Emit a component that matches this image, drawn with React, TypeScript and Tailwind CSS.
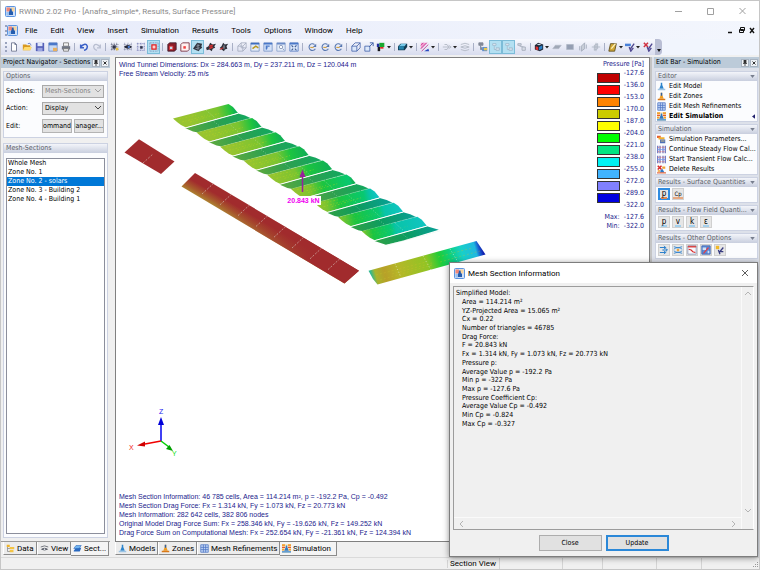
import type { ReactNode } from "react";
import clsx from "clsx";

const MENU = ["File", "Edit", "View", "Insert", "Simulation", "Results", "Tools", "Options", "Window", "Help"];

const LEGEND = [
  { color: "#c00000", value: "-127.6" },
  { color: "#ff0000", value: "-136.0" },
  { color: "#ff8400", value: "-153.0" },
  { color: "#cccc00", value: "-170.0" },
  { color: "#ffff00", value: "-187.0" },
  { color: "#00ff00", value: "-204.0" },
  { color: "#00e682", value: "-221.0" },
  { color: "#00f2f2", value: "-238.0" },
  { color: "#40b4ff", value: "-255.0" },
  { color: "#8080ff", value: "-272.0" },
  { color: "#0000e0", value: "-289.0" },
];

const SECTIONS = ["Whole Mesh", "Zone No. 1", "Zone No. 2 - solars", "Zone No. 3 - Building 2", "Zone No. 4 - Building 1"];

const INFO = [
  "Area = 114.214 m²",
  "YZ-Projected Area = 15.065 m²",
  "Cx = 0.22",
  "Number of triangles = 46785",
  "Drag Force:",
  "F = 20.843 kN",
  "Fx = 1.314 kN, Fy = 1.073 kN, Fz = 20.773 kN",
  "Pressure p:",
  "Average Value p = -192.2 Pa",
  "Min p = -322 Pa",
  "Max p = -127.6 Pa",
  "Pressure Coefficient Cp:",
  "Average Value Cp = -0.492",
  "Min Cp = -0.824",
  "Max Cp = -0.327",
];

const ICONS: Record<string, ReactNode> = {
  new: <path d="M3 1h4l2 2v8H3z M7 1v2h2" fill="#fff" stroke="#66708c" />,
  open: (
    <>
      <path d="M1 3h4l1 1h4v6H1z" fill="#d99a20" />
      <path d="M3 6h9l-2 4H1z" fill="#ffdc70" />
      <path d="M7 2q3-2 4 2" fill="none" stroke="#5a78c8" />
    </>
  ),
  save: (
    <>
      <path d="M1 1h10v10H1z" fill="#5560b8" />
      <path d="M3 1h6v4H3z" fill="#dfe6fa" />
      <path d="M3 7h6v4H3z" fill="#9aa4e0" />
    </>
  ),
  table: (
    <>
      <path d="M1 1h10v10H1z" fill="#c8daf4" stroke="#6d8cc4" />
      <path d="M1 1h10v3H1z" fill="#4a78c8" />
      <path d="M6 7h5v4H6z" fill="#e8b060" />
    </>
  ),
  print: (
    <>
      <path d="M3 1h6v4H3z" fill="#f4f4f4" stroke="#777" />
      <path d="M1 5h10v4H1z" fill="#707684" />
      <path d="M3 8h6v3H3z" fill="#eee" stroke="#777" />
    </>
  ),
  undo: <path d="M2 3v4h4M2 6q6-6 8-1q0 4-4 5" fill="none" stroke="#3c62c8" strokeWidth="1.8" />,
  redo: <path d="M10 3v4H6M10 6q-6-6-8-1q0 4 4 5" fill="none" stroke="#b8bed0" strokeWidth="1.5" />,
  mesh: (
    <>
      <path d="M2 1v10M5 1v10M8 1v10M1 3h10M1 6h10M1 9h10" stroke="#5a5f78" strokeDasharray="1 1" />
      <path d="M3 4h4v4H3z" fill="#303448" />
      <path d="M7 7h3v3H7z" fill="#e8c040" />
    </>
  ),
  meshEye: (
    <>
      <path d="M2 1v10M6 1v10M10 1v10M1 3h10M1 9h10" stroke="#7a80a0" strokeDasharray="1 1" />
      <path d="M1 6q5-5 10 0q-5 4-10 0z" fill="#252838" />
      <circle cx="7" cy="6" r="1.4" fill="#5080d8" />
    </>
  ),
  meshDots: (
    <>
      <path d="M2 1v10M6 1v10M10 1v10M1 2h10M1 6h10M1 10h10" stroke="#6a70b0" strokeDasharray="1 1" />
      <path d="M5 5h3v3H5z" fill="#30344c" />
    </>
  ),
  meshRed: (
    <>
      <path d="M1 1v10M11 1v10M1 1h10M1 11h10" stroke="#6a80b0" strokeDasharray="1 1" />
      <path d="M3.500 3.500h5v5h-5z" fill="#ffd0d0" stroke="#e02020" strokeWidth="1.500" />
    </>
  ),
  boxDark: (
    <>
      <path d="M1 3l2-2h8v8l-2 2H1z" fill="#8c1c28" stroke="#402030" />
      <path d="M3 5h4v4H3z" fill="#c8dcf0" stroke="#e03030" />
    </>
  ),
  boxLight: (
    <>
      <path d="M1 3l2-2h8v8l-2 2H1z" fill="#fff0f0" stroke="#702838" />
      <path d="M4 5h3v3H4z" fill="#f04040" />
    </>
  ),
  wheel: (
    <>
      <path d="M0 8l2-3 3-4 6 1-1 3 1 2-3 2-1 2-3-1-2-1z" fill="#303440" />
      <path d="M4 5l4-1M3 8l5-1M6 2v8" stroke="#a8b4c0" strokeWidth=".8" />
    </>
  ),
  wheelRed: (
    <>
      <path d="M0 7l3-2 2-4 3 2 4-1-2 3 1 2-3 1-1 3-3-2-3 1z" fill="#30323c" />
      <path d="M4 5l4-1M4 8l4-2" stroke="#d83030" strokeWidth="1.800" />
    </>
  ),
  wheelAxis: (
    <>
      <path d="M1 7l2-2 2-4 2 2 4-1-2 3 1 3-3 1-1 2-3-2z" fill="#30323c" />
      <path d="M1 9l4-2" stroke="#c83030" strokeWidth="1.300" />
      <path d="M6 4v4" stroke="#bcc4d0" />
    </>
  ),
  boxGrey: <path d="M1 5h6v6H1zM1 5l4-4h6v6l-4 4M7 5l4-4M5 1v6M5 7h6" fill="none" stroke="#a0a8ba" strokeWidth=".9" />,
  winPen: (
    <>
      <path d="M1 1h10v10H1z" fill="#e4ecf8" stroke="#8098c0" />
      <path d="M1 1h10v2H1z" fill="#3c6cc0" />
      <path d="M3 8l4-3 3 2" stroke="#b89820" strokeWidth="1.800" fill="none" />
    </>
  ),
  winBlue: (
    <>
      <path d="M1 1h10v10H1z" fill="#d4e2f8" stroke="#7c98c8" />
      <path d="M1 1h10v2H1z" fill="#4a78c8" />
      <path d="M8 5H4v4M4 9l1-3" stroke="#4a78c8" strokeWidth="1.500" fill="none" />
    </>
  ),
  winZoom: (
    <>
      <path d="M1 1h10v10H1z" fill="#e4ecf8" stroke="#8ca4cc" />
      <path d="M1 1h10v2H1z" fill="#6c8cc8" />
      <circle cx="6" cy="6" r="2" fill="#fff" stroke="#8494b4" />
      <path d="M8 8l2 2" stroke="#8494b4" />
    </>
  ),
  winFit: (
    <>
      <path d="M1 1h10v10H1z" fill="#dce8fa" stroke="#5a80c4" />
      <path d="M3 4l2 2M9 4L7 6M3 10l2-2M9 10L7 8" stroke="#405c94" strokeWidth="1.300" />
      <path d="M1 1h10v2H1z" fill="#4a78c8" />
    </>
  ),
  rotate: (
    <>
      <path d="M9 3a4 4 0 1 0 1 5" fill="none" stroke="#5878b0" strokeWidth="1.300" />
      <path d="M4 6.500h4" stroke="#d0a040" strokeWidth="1.300" />
      <path d="M11 2v4H7z" fill="#5878b0" />
    </>
  ),
  cube: (
    <>
      <path d="M1 5h6v6H1z" fill="#dce8fa" stroke="#4868ac" />
      <path d="M1 5l4-4h6v6l-4 4M7 5l4-4" fill="none" stroke="#4868ac" />
    </>
  ),
  cubeArrow: (
    <>
      <path d="M1 5h6v6H1z" fill="#dce8fa" stroke="#4868ac" />
      <path d="M6 6l5-5M7 1h4v4" fill="none" stroke="#4868ac" strokeWidth="1.200" />
    </>
  ),
  rgb: (
    <>
      <path d="M2 6h3v5H2z" fill="#18181c" />
      <path d="M4 1h6v5H4z" fill="#18a830" />
      <path d="M5 6h4v2H5z" fill="#e02828" />
      <path d="M1 2h3v4H1z" fill="#2430a0" />
    </>
  ),
  solid: (
    <>
      <path d="M0 5l3-3h8v4l-3 4H0z" fill="#123c54" />
      <path d="M1 5l3-3h6L8 5z" fill="#76c8e8" />
      <path d="M1 5h6v4H1z" fill="#2484ac" />
    </>
  ),
  hatch: (
    <>
      <path d="M1 1h8L1 9z" fill="#f4a0d0" />
      <path d="M1 8l7-7M1 4l3-3M2 11l8-8" stroke="#c03090" />
      <path d="M5 11h6l-1-3z" fill="#2848c0" />
    </>
  ),
  lines: <path d="M3 3h3l2 3M1 6h8M3 9h3l2-3M8 4l3 2-3 2" fill="none" stroke="#b0b6c2" />,
  swirl: <path d="M1 3q5-3 10 0M1 6q5-3 10 0q-5 3-10 0M1 9q5 3 10 0" fill="none" stroke="#b0b6c2" />,
  tag: (
    <>
      <path d="M1 1h5v3H1zM3 4v5h3" fill="#808898" stroke="#808898" />
      <path d="M5 6h6v5H5z" fill="#5c8cd0" />
      <path d="M7 7h4v3H7z" fill="#e8c850" />
    </>
  ),
  tagPale: (
    <>
      <path d="M2 2h4v2H2zM4 5v4h3" fill="#eef4fa" stroke="#9cb8cc" />
      <path d="M6 7h4v3H6z" fill="#d8e4ee" stroke="#9cb8cc" />
    </>
  ),
  tagGrey: (
    <>
      <path d="M1 2h4v2H1zM3 5l5 1" fill="#d8dce6" stroke="#a4acba" />
      <path d="M6 6h4v4H6z" fill="#d8dce6" stroke="#a4acba" />
    </>
  ),
  rgbCube: (
    <>
      <path d="M1 4l4-3 6 2v6l-4 2-6-2z" fill="#222838" />
      <path d="M2 5l3 1v4l-3-1z" fill="#e03030" />
      <path d="M6 6l4-2v4l-4 2z" fill="#2880c8" />
      <path d="M3 3l3-1 3 1-3 1z" fill="#c8dce8" />
    </>
  ),
  plane: <path d="M1 8l3-4h7L8 8z" fill="#a0a8b6" stroke="#b4bac8" />,
  planeFront: <path d="M2 3h8v6H2z" fill="#949eb2" stroke="#b0b8c6" />,
  planeSide: <path d="M4 5l4-4v7l-4 3zM2 5v5M10 3v5" fill="#c8ced8" stroke="#a0a8b8" />,
  planeCut: <path d="M1 6h10M6 1v10M4 4l4-2v6L4 10z" fill="#d4d8e2" stroke="#acb4c2" />,
  section: (
    <>
      <path d="M1 11l2-9h7L8 11z" fill="#d0a838" stroke="#584818" />
      <path d="M4 8l5-6" stroke="#fff4c0" strokeWidth="1.500" />
    </>
  ),
  result: (
    <>
      <path d="M0 2h7v3H0z" fill="#4880d8" />
      <path d="M6 9l5-7M5 6l2 5 3-4" fill="none" stroke="#504890" strokeWidth="1.600" />
    </>
  ),
  resultDel: (
    <>
      <path d="M1 1l5 5M6 1L1 6" stroke="#d03040" strokeWidth="1.800" />
      <path d="M6 9l5-7M5 6l2 5 3-4" fill="none" stroke="#504890" strokeWidth="1.600" />
    </>
  ),
  cone: (
    <>
      <path d="M5 1h2v3l2 5H3l2-5z" fill="#2c84cc" />
      <path d="M1 9h10v2H1z" fill="#9cc4e4" />
    </>
  ),
  coneZone: (
    <>
      <path d="M5 1h2v3l2 5H3l2-5z" fill="#f09c20" />
      <path d="M5 1h2v4H5z" fill="#3060a0" />
      <path d="M1 9h10v2H1z" fill="#d87818" />
    </>
  ),
  grid: (
    <>
      <path d="M1 1h10v10H1z" fill="#c0d4f4" stroke="#4c74c4" />
      <path d="M4.500 1v10M7.500 1v10M1 4.500h10M1 7.500h10" stroke="#4c74c4" />
    </>
  ),
  sim: (
    <>
      <path d="M0 0h12v12H0z" fill="#fbe6c0" />
      <path d="M0 1.500h4M8 1.500h4M0 7.500h3M9 7.500h3" stroke="#f0a030" strokeWidth="2.400" />
      <path d="M0 4.500h4M8 4.500h4" stroke="#e85828" strokeWidth="1.800" />
      <path d="M5 2h2v2l2 5H3l2-5z" fill="#3078c4" />
      <path d="M0 10.500h12" stroke="#3c8cd8" strokeWidth="1.800" />
    </>
  ),
  params: (
    <>
      <path d="M0 1h5v3H0z" fill="#e86030" />
      <path d="M2 3h8v3H2z" fill="#f0b030" />
      <path d="M4 6h7v5H4z" fill="#4c70b8" />
      <path d="M5 8h5" stroke="#f8d070" />
    </>
  ),
  flow: (
    <>
      <path d="M1 1v10M11 1v10M4 1v10M8 1v10" stroke="#3850b8" strokeWidth="1.300" />
      <path d="M1 3h10M1 9h10" stroke="#e06868" strokeDasharray="2 1" />
      <path d="M1 6h10" stroke="#7c98e4" />
    </>
  ),
  remove: (
    <>
      <path d="M1 1l5 5M6 1L1 6" stroke="#d82828" strokeWidth="2" />
      <path d="M7 2h4v3H7zM1 7h3v2H1z" fill="#f0a030" />
      <path d="M5 7l2-2 3 5H4z" fill="#3078c4" />
      <path d="M0 10.500h12" stroke="#e86030" strokeWidth="1.500" />
    </>
  ),
  tree: (
    <>
      <path d="M1 1h4v3H1z" fill="#f0b428" />
      <path d="M2 4v6h4M2 6h4" fill="none" stroke="#888" />
      <path d="M5 4h6v3H5zM5 8h5v3H5z" fill="#f4c444" />
    </>
  ),
  eye: (
    <>
      <path d="M1 4q5-3 10 0" fill="none" stroke="#50545e" />
      <path d="M1 7q5-4 10 0q-5 3-10 0z" fill="#50545e" />
      <circle cx="6" cy="7" r="1.200" fill="#d8dce4" />
    </>
  ),
  layers: (
    <>
      <path d="M1 9l3-4h7L9 10H1z" fill="#2868c0" />
      <path d="M1 6l3-4h7L8 6H1z" fill="#70b4f0" stroke="#2060b8" strokeWidth=".7" />
    </>
  ),
  arrows: <path d="M1 3h7M4 6h6M1 9h7M6 1l2 2-2 2M8 4l2 2-2 2M6 7l2 2-2 2" fill="none" stroke="#2c80cc" strokeWidth="1.200" />,
  stream: (
    <>
      <path d="M1 2q5 3 10 0M1 10q5-3 10 0M1 5q5-4 10 0M1 7q5 4 10 0" fill="none" stroke="#2c80cc" />
      <circle cx="6" cy="6" r="1.600" fill="#f0a840" />
    </>
  ),
  chart: (
    <>
      <path d="M1 1h10v10H1z" fill="#f8f8fc" stroke="#8c98b8" />
      <path d="M1 1h10v2H1z" fill="#d84848" />
      <path d="M2 5l3 1 2 2 3 1" fill="none" stroke="#d82828" strokeWidth="1.300" />
    </>
  ),
  probe: (
    <>
      <path d="M1 1h10v10H1z" fill="#5c8cd8" stroke="#3c64b0" />
      <path d="M3 10l6-7" stroke="#e04048" strokeWidth="1.500" />
      <path d="M2 3h4v3H2zM8 7h2v3H8z" fill="#d0e0f8" />
    </>
  ),
  pen: (
    <>
      <path d="M1 1h4v4H1z" fill="#f0b828" />
      <path d="M5 9l5-6M4 6l2 5M6 8h4" fill="none" stroke="#383c80" strokeWidth="1.500" />
    </>
  ),
};

type Tool = { icon: string; active?: boolean; drop?: boolean };

const on = (icon: string): Tool => ({ icon, active: true });
const dd = (icon: string): Tool => ({ icon, drop: true });

const TOOLS: (string | Tool)[][] = [
  ["new", "open", "save", "table", "print"],
  ["undo", "redo"],
  ["mesh", "meshEye", "meshDots", on("meshRed")],
  ["boxDark", "boxLight", on("wheel"), "wheelRed", "wheelAxis"],
  ["boxGrey", "winPen", "winBlue", "winZoom", "winFit"],
  ["rotate", "rotate", "rotate"],
  ["cube", "cubeArrow", dd("rgb")],
  [dd("solid")],
  [dd("hatch")],
  [dd("lines"), "swirl"],
  ["tag", on("tagPale"), on("tagPale"), "tagGrey"],
  [dd("rgbCube"), "plane", "planeFront", "planeSide", "planeCut"],
  [dd("section"), dd("result"), "resultDel"],
];

function Icon({ name, className = "size-[10px]" }: { name: string; className?: string }) {
  return (
    <svg viewBox="0 0 12 12" className={clsx("shrink-0", className)} aria-hidden="true">
      {ICONS[name]}
    </svg>
  );
}

function AppIcon() {
  return (
    <svg viewBox="0 0 22 22" className="size-[11px] shrink-0" aria-hidden="true">
      <rect x="1" y="1" width="20" height="20" rx="2" fill="#cfe0f8" stroke="#5c94e0" strokeWidth="2" />
      <path d="M3 3h7v8H3z" fill="#f08878" />
      <path d="M12 3h7v8h-7z" fill="#f8d49c" />
      <path d="M3 12h5v7H3z" fill="#98c0f0" />
      <path d="M10 5h3l1 6h2v7H8v-7h1z" fill="#245cae" />
    </svg>
  );
}

function Toolbar() {
  return (
    <div className="flex h-4 bg-[#f1f5fd]">
      <div className="flex items-center rounded-r bg-linear-to-b from-[#f8f9fe] to-[#d8dcee] pl-1">
        <span className="h-[10px] border-l-2 border-dotted border-[#9aa3bd]" />
        {TOOLS.map((group, g) => (
          <div key={g} className="flex items-center">
            {g > 0 && <span className="mx-[2px] h-2 w-px bg-[#a9b0c6]" />}
            {group.map((entry, i) => {
              const tool: Tool = typeof entry === "string" ? { icon: entry } : entry;
              return (
                <button
                  key={i}
                  type="button"
                  aria-label={tool.icon}
                  className={clsx(
                    "flex h-[14px] items-center justify-center",
                    tool.drop ? "w-[17px] gap-px" : "w-[13px]",
                    tool.active && "border border-[#7cbcd8] bg-[#b4e0f2]",
                  )}
                >
                  <Icon name={tool.icon} />
                  {tool.drop && (
                    <svg viewBox="0 0 4 4" className="size-1 shrink-0">
                      <path d="M0 1h4L2 3.500z" fill="#222" />
                    </svg>
                  )}
                </button>
              );
            })}
          </div>
        ))}
        <button type="button" aria-label="More buttons" className="ml-px flex h-4 w-[7px] items-end justify-center rounded-r bg-[#b9bed4] pb-[3px]">
          <svg viewBox="0 0 4 3" className="h-[3px] w-1">
            <path d="M0 0h4L2 3z" fill="#111" />
          </svg>
        </button>
      </div>
    </div>
  );
}

function PaneTitle({ children }: { children: ReactNode }) {
  return (
    <div className="flex h-[11px] items-center bg-[#bccbd9] pr-px pl-[2px] text-black">
      <h2 className="flex-1 whitespace-nowrap">{children}</h2>
      <button type="button" aria-label="Pin" className="mr-px flex size-2 items-center justify-center border border-[#a8b3c0] bg-[#eef2f6]">
        <svg viewBox="0 0 6 6" className="size-[6px]">
          <path d="M2 0h2v3H2zM1 3.500h4M3 4v2" fill="#333" stroke="#333" strokeWidth=".8" />
        </svg>
      </button>
      <button type="button" aria-label="Close" className="flex size-2 items-center justify-center border border-[#a8b3c0] bg-[#eef2f6]">
        <svg viewBox="0 0 6 6" className="size-[6px]">
          <path d="M1.500 1.500l3 3M4.500 1.500l-3 3" stroke="#333" />
        </svg>
      </button>
    </div>
  );
}

function Group({ title, arrow, className, children }: { title: string; arrow?: boolean; className?: string; children: ReactNode }) {
  return (
    <section className={clsx("flex flex-col border border-[#ccd2e2] bg-[#fbfcfe]", className)}>
      <h3 className="flex h-[9px] items-center bg-linear-to-b from-[#f3f5fa] to-[#c8cede] pr-[2px] pl-[2px] whitespace-nowrap text-[#5c5f68]">
        <span className="flex-1">{title}</span>
        {arrow && (
          <svg viewBox="0 0 6 4" className="h-[3px] w-[5px]">
            <path d="M0 0h6L3 4z" fill="#777e8e" />
          </svg>
        )}
      </h3>
      {children}
    </section>
  );
}

function Navigator() {
  const field = "h-[13px] w-full appearance-none border border-[#a9a9a9] bg-[#e2e2e2] pl-[2px] leading-none";
  return (
    <aside className="flex w-[114px] shrink-0 flex-col pr-[5px]">
      <PaneTitle>Project Navigator - Sections</PaneTitle>
      <div className="flex flex-1 flex-col gap-[5px] border-b border-[#9a9a9a] bg-[#f0f0f0] px-[2px] pt-[3px] pb-[3px]">
        <Group title="Options">
          <div className="grid grid-cols-[36px_1fr] items-center gap-y-1 py-1 pr-[3px] pl-[2px]">
            <label htmlFor="sections">Sections:</label>
            <span className="relative">
              <select id="sections" disabled className={clsx(field, "bg-[#cccccc] text-[#838383]")}>
                <option>Mesh-Sections</option>
              </select>
              <Chevron className="absolute top-1 right-[3px] text-[#a0a0a0]" />
            </span>
            <label htmlFor="action">Action:</label>
            <span className="relative">
              <select id="action" className={field}>
                <option>Display</option>
              </select>
              <Chevron className="absolute top-1 right-[3px] text-[#444]" />
            </span>
            <span>Edit:</span>
            <span className="grid grid-cols-2 gap-[2px]">
              {["Command", "Manager..."].map((name) => (
                <button key={name} type="button" className="flex h-[14px] justify-end overflow-hidden border border-[#b4b4b4] bg-[#e2e2e2] leading-3">
                  {name}
                </button>
              ))}
            </span>
          </div>
        </Group>
        <Group title="Mesh-Sections" className="flex-1">
          <ul className="mx-[2px] mt-[5px] mb-[3px] flex-1 border border-[#8c8f9c] bg-white" role="listbox" aria-label="Mesh sections">
            {SECTIONS.map((name, i) => (
              <li
                key={name}
                role="option"
                aria-selected={i === 2}
                className={clsx("h-[9px] pl-px leading-[9px] whitespace-nowrap", i === 2 && "bg-[#0078d7] text-white")}
              >
                {name}
              </li>
            ))}
          </ul>
        </Group>
      </div>
      <div className="flex h-[15px] items-start pl-[2px] font-[Roboto,sans-serif] text-[8px]">
        <Tab icon="tree" className="w-[34px]">Data</Tab>
        <Tab icon="eye" className="w-[34px]">View</Tab>
        <Tab icon="layers" className="w-[38px]" active>Sect...</Tab>
      </div>
    </aside>
  );
}

function Chevron({ className }: { className?: string }) {
  return (
    <svg viewBox="0 0 6 4" className={clsx("pointer-events-none h-1 w-[6px]", className)}>
      <path d="M0 0l3 3 3-3" fill="none" stroke="currentColor" />
    </svg>
  );
}

function Tab({ icon, active, className, children }: { icon: string; active?: boolean; className?: string; children: ReactNode }) {
  return (
    <button
      type="button"
      className={clsx(
        "flex items-center gap-[2px] border-r border-b border-[#8b8b8b] px-[2px] whitespace-nowrap",
        active ? "h-[14px] bg-[#f4f4f4]" : "h-[13px] border-l border-l-white bg-[#ececec]",
        className,
      )}
    >
      <Icon name={icon} className="size-[9px]" />
      {children}
    </button>
  );
}

// share of the row width at which yellow turns green, and green turns cyan
const GREEN_AT = [0.85, 0.8, 0.74, 0.66, 0.56, 0.42, 0.3, 0.16, 0.06];
const CYAN_AT = [1.6, 1.5, 1.4, 1.3, 1.2, 1.05, 0.9, 0.75, 0.55];
const ROW = { dx: 23.6, dy: 14.1 };

function SolarField() {
  return (
    <g>
      {GREEN_AT.map((green, i) => {
        const x = i * ROW.dx;
        const y = i * ROW.dy;
        return (
          <g key={i} transform={`translate(${x} ${y})`}>
            <defs>
              <linearGradient id={`lit${i}`} gradientUnits="userSpaceOnUse" x1="174" y1="122" x2="234" y2="108">
                <stop offset={Math.max(green - 0.6, 0)} stopColor={i > 6 ? "#84c030" : "#98c430"} />
                <stop offset={Math.max(green - 0.12, 0.02)} stopColor="#7cc430" />
                <stop offset={green + 0.1} stopColor="#1cc440" />
                {CYAN_AT[i] < 1.1 && <stop offset={Math.min(CYAN_AT[i] - 0.1, 1)} stopColor="#08c870" />}
                {CYAN_AT[i] < 1 && <stop offset={CYAN_AT[i]} stopColor="#08c4a8" />}
                <stop offset="1" stopColor={i > 5 ? "#10c4c0" : "#10b054"} />
              </linearGradient>
              <linearGradient id={`shade${i}`} gradientUnits="userSpaceOnUse" x1="190" y1="130" x2="250" y2="114">
                <stop offset="0" stopColor={i > 5 ? "#2ca048" : "#58a840"} />
                <stop offset=".45" stopColor={i > 5 ? "#0c9c60" : "#2ca050"} />
                <stop offset="1" stopColor={i > 5 ? "#08a098" : "#10a860"} />
              </linearGradient>
            </defs>
            <path d="M173 118.500L228.500 104L233 107L238 113L186 127.500L181 125L177 122z" fill={`url(#lit${i})`} />
            <path
              d={i === 8 ? "M185 128L238 113.500L250 117L214 128L197 132z" : "M185 128L238 113.500L245 115.500L251 118.200L198 132.500L193 131.500z"}
              fill={`url(#shade${i})`}
            />
            <path d="M179 119l18-4M182 122l26-7M190 122l30-9" stroke="#c8d820" strokeWidth=".6" strokeDasharray="2 1.500 1 2" opacity={i > 6 ? 0.2 : 0.6} />
            <path d="M184.500 128.200L238 113.300" stroke="#fff" strokeWidth="1" />
            <path d="M198 132.500L251 118.100" stroke="#e4f4e8" strokeWidth=".5" strokeDasharray="5 .8" />
            <path d="M206 110l10 9M212 120l9 7" stroke="#e8f4e0" strokeWidth=".5" strokeDasharray="1 1.500" opacity=".7" />
          </g>
        );
      })}
    </g>
  );
}

function Model() {
  return (
    <svg className="absolute inset-0 size-full" aria-label="Surface pressure on the solar panels">
      <defs>
        <linearGradient id="strip" gradientUnits="userSpaceOnUse" x1="252" y1="231" x2="259" y2="219">
          <stop offset="0" stopColor="#b09a34" />
          <stop offset=".5" stopColor="#a85c2c" />
          <stop offset="1" stopColor="#a12b2d" />
        </linearGradient>
        <linearGradient id="stripFade" gradientUnits="userSpaceOnUse" x1="215" y1="200" x2="315" y2="255">
          <stop offset="0" stopColor="#a12b2d" stopOpacity="0" />
          <stop offset="1" stopColor="#a12b2d" />
        </linearGradient>
        <linearGradient id="tail" gradientUnits="userSpaceOnUse" x1="372" y1="278" x2="482" y2="248">
          <stop offset="0" stopColor="#30b890" />
          <stop offset=".04" stopColor="#a8b42c" />
          <stop offset=".12" stopColor="#b8a028" />
          <stop offset=".25" stopColor="#b4b828" />
          <stop offset=".5" stopColor="#90c424" />
          <stop offset=".62" stopColor="#20cc38" />
          <stop offset=".72" stopColor="#0cd080" />
          <stop offset=".82" stopColor="#18d0c8" />
          <stop offset=".94" stopColor="#20b8e0" />
          <stop offset=".97" stopColor="#1860d0" />
          <stop offset="1" stopColor="#1020b0" />
        </linearGradient>
      </defs>
      <g transform="translate(-116 -58)">
        <SolarField />
        <path d="M124.500 152.500L139 139.300L174.500 161.500L161 174z" fill="#a12b2d" />
        <path d="M143 163l10-9" stroke="#d8c8c0" strokeWidth=".6" strokeDasharray="2 1.500" />
        <path d="M181.500 186.500L195 173L359 270.700L344.500 283.500z" fill="url(#strip)" />
        <path d="M181.500 186.500L195 173L359 270.700L344.500 283.500z" fill="url(#stripFade)" />
        {[0, 1, 2, 3, 4, 5, 6, 7].map((i) => (
          <path
            key={i}
            d={`M${202 + i * 18} ${194 + i * 10.8}l12 -11`}
            stroke="#dccfc4"
            strokeWidth=".6"
            strokeDasharray="2 1.500"
          />
        ))}
        <path d="M368.500 270.700L476.500 241L485.500 254.500L377.500 284.500L373 279z" fill="url(#tail)" />
        <path d="M376 275l50-13M380 280l52-15M392 274l40-11M440 262l40-11M438 257l34-9" stroke="#d0c428" strokeWidth=".5" strokeDasharray="2 2" opacity=".6" />
        <path d="M395 263.500l6 14M423 256l8 14M450 249l8 13" stroke="#e8f0e0" strokeWidth=".6" strokeDasharray="1 2" />
        <path d="M302.500 177v15" stroke="#98209c" strokeWidth="1.500" />
        <path d="M302.500 169.500l3 7.500h-6z" fill="#98209c" />
        <path d="M286 196h35v9h-35z" fill="#fff" />
        <text x="303.500" y="203" textAnchor="middle" className="fill-[#f000f0] font-['Liberation_Sans',sans-serif] text-[7px] font-bold">
          20.843 kN
        </text>
      </g>
    </svg>
  );
}

function Axes() {
  return (
    <svg viewBox="0 0 56 54" className="ml-[9px] h-[54px] w-[56px] font-['Liberation_Sans',sans-serif] text-[7px]">
      <path d="M36 35V18" stroke="#0000f0" strokeWidth="1.500" />
      <path d="M36 11l3 8h-6z" fill="#0000d8" />
      <path d="M36 35L20 38" stroke="#f00000" strokeWidth="1.500" />
      <path d="M12 39.500l8-4v5z" fill="#d00000" />
      <path d="M36 35l8 6" stroke="#00d000" strokeWidth="1.500" />
      <path d="M48 45l-7-2 3.500-4z" fill="#00a000" />
      <text x="34" y="8" fill="#2020f0">Z</text>
      <text x="4" y="44" fill="#f02020">X</text>
      <text x="47" y="50" fill="#10e010">Y</text>
    </svg>
  );
}

function Legend() {
  return (
    <div className="relative flex flex-col items-end pt-[2px] pr-[5px]">
      <div className="h-[9px] leading-[9px]">Pressure [Pa]</div>
      <div className="flex gap-1">
        <div className="flex flex-col gap-[2px] pt-[4px]">
          {LEGEND.map((step) => (
            <span key={step.value} className="h-[10px] w-[23px] border border-[#333]" style={{ backgroundColor: step.color }} />
          ))}
        </div>
        <div className="text-right">
          {[...LEGEND.map((step) => step.value), "-322.0"].map((value) => (
            <div key={value} className="h-3 leading-[9px]">{value}</div>
          ))}
        </div>
      </div>
      <dl className="grid grid-cols-[auto_auto] gap-x-1 text-right leading-[9px]">
        <dt>Max:</dt>
        <dd>-127.6</dd>
        <dt>Min:</dt>
        <dd>-322.0</dd>
      </dl>
    </div>
  );
}

function Viewport() {
  return (
    <main className="flex min-w-0 flex-1 flex-col">
      <div className="relative flex flex-1 flex-col justify-between border-t border-r border-l border-[#808080] bg-white text-[#22228c]">
        <Model />
        <div className="relative flex justify-between">
          <div className="pt-[2px] pl-[3px] font-['Liberation_Sans',sans-serif] text-[7px] leading-[9px]">
            <p>Wind Tunnel Dimensions: Dx = 284.663 m, Dy = 237.211 m, Dz = 120.044 m</p>
            <p>Free Stream Velocity: 25 m/s</p>
          </div>
          <Legend />
        </div>
        <div className="relative flex flex-col gap-8 pb-1">
          <Axes />
          <div className="pl-[3px] font-['Liberation_Sans',sans-serif] text-[7px] leading-[9px]">
            <p>Mesh Section Information: 46 785 cells, Area = 114.214 m², p = -192.2 Pa, Cp = -0.492</p>
            <p>Mesh Section Drag Force: Fx = 1.314 kN, Fy = 1.073 kN, Fz = 20.773 kN</p>
            <p>Mesh Information: 282 642 cells, 382 806 nodes</p>
            <p>Original Model Drag Force Sum: Fx = 258.346 kN, Fy = -19.626 kN, Fz = 149.252 kN</p>
            <p>Drag Force Sum on Computational Mesh: Fx = 252.654 kN, Fy = -21.361 kN, Fz = 124.394 kN</p>
          </div>
        </div>
      </div>
      <div className="flex h-4 items-start border-t border-[#808080] font-[Roboto,sans-serif] text-[8px]">
        <Tab icon="cone" className="w-[43px]">Models</Tab>
        <Tab icon="coneZone" className="w-[39px]">Zones</Tab>
        <Tab icon="grid" className="w-[83px]">Mesh Refinements</Tab>
        <Tab icon="sim" className="w-[57px]" active>Simulation</Tab>
      </div>
    </main>
  );
}

function Command({ icon, active, children }: { icon: string; active?: boolean; children: ReactNode }) {
  return (
    <button type="button" className={clsx("flex flex-1 items-center gap-[3px] pr-[2px] text-left whitespace-nowrap", active && "font-bold")}>
      <Icon name={icon} className="size-[9px]" />
      <span className="flex-1">{children}</span>
      {active && (
        <svg viewBox="0 0 4 6" className="h-[5px] w-[3px]">
          <path d="M4 0v6L0 3z" fill="#20206c" />
        </svg>
      )}
    </button>
  );
}

function Quantity({ label, active, children }: { label: string; active?: boolean; children: ReactNode }) {
  return (
    <button
      type="button"
      aria-label={label}
      className={clsx(
        "flex h-3 w-[12px] items-center justify-center text-[8px] leading-none",
        active ? "border-2 border-[#2f8be0] bg-[#e4e4e4]" : "border border-[#d0d0d0] bg-[#e6e6e6]",
      )}
    >
      {children}
    </button>
  );
}

function Letter({ line, children }: { line: string; children: ReactNode }) {
  return <span className={clsx("flex h-[9px] items-center border-b-2 px-px leading-[7px]", line)}>{children}</span>;
}

function EditBar() {
  const list = "flex h-10 flex-col pl-px";
  const row = "flex gap-[2px] px-[2px] pt-px pb-[2px]";
  return (
    <aside className="flex w-[109px] shrink-0 flex-col border-l-2 border-[#c4c4c4] bg-[#dde1ea] pl-[2px]">
      <PaneTitle>Edit Bar - Simulation</PaneTitle>
      <div className="flex flex-col gap-[2px] px-px pt-[3px]">
        <Group title="Editor" arrow>
          <div className={list}>
            <Command icon="cone">Edit Model</Command>
            <Command icon="coneZone">Edit Zones</Command>
            <Command icon="grid">Edit Mesh Refinements</Command>
            <Command icon="sim" active>Edit Simulation</Command>
          </div>
        </Group>
        <Group title="Simulation" arrow>
          <div className={list}>
            <Command icon="params">Simulation Parameters...</Command>
            <Command icon="flow">Continue Steady Flow Cal...</Command>
            <Command icon="flow">Start Transient Flow Calc...</Command>
            <Command icon="remove">Delete Results</Command>
          </div>
        </Group>
        <Group title="Results - Surface Quantities" arrow>
          <div className={row}>
            <Quantity label="p" active><Letter line="border-[#e08850]">p</Letter></Quantity>
            <Quantity label="Cp"><Letter line="border-[#e8a880]"><span className="text-[6px]">Cp</span></Letter></Quantity>
          </div>
        </Group>
        <Group title="Results - Flow Field Quanti..." arrow>
          <div className={row}>
            {["p", "v", "k", "ε"].map((q) => (
              <Quantity key={q} label={q}><Letter line="border-[#a4d0ec]">{q}</Letter></Quantity>
            ))}
          </div>
        </Group>
        <Group title="Results - Other Options" arrow>
          <div className={row}>
            {["arrows", "stream", "chart", "probe", "pen"].map((q) => (
              <Quantity key={q} label={q}><Icon name={q} /></Quantity>
            ))}
          </div>
        </Group>
      </div>
    </aside>
  );
}

function InfoDialog() {
  return (
    <div
      role="dialog"
      aria-label="Mesh Section Information"
      className="absolute right-px bottom-3 flex h-[295px] w-[309px] flex-col border border-[#7d7d7d] bg-[#f0f0f0] shadow-[0_1px_6px_rgba(0,0,0,0.45)]"
    >
      <div className="flex h-5 shrink-0 items-center gap-[3px] bg-white pr-2 pl-[4px] font-[Roboto,sans-serif] text-[8px]">
        <AppIcon />
        <h2 className="flex-1">Mesh Section Information</h2>
        <button type="button" aria-label="Close dialog">
          <svg viewBox="0 0 8 8" className="size-2">
            <path d="M1 1l6 6M7 1L1 7" stroke="#333" strokeWidth=".8" />
          </svg>
        </button>
      </div>
      <div className="mx-[3px] mt-[3px] flex flex-1 border border-[#9c9c9c] border-r-white">
        <div className="flex flex-1 flex-col">
          <div className="grid h-[141px] flex-none items-center pt-[2px] pl-[2px] leading-[8px]">
            <p>Simplified Model:</p>
            {INFO.map((line) => (
              <p key={line} className="pl-[6px]">{line}</p>
            ))}
          </div>
          <div className="mt-auto flex h-3 items-center justify-between border-t border-[#fafafa] px-1 text-[#b4b4b4]">
            <Chevron className="rotate-90" />
            <Chevron className="-rotate-90" />
          </div>
        </div>
        <div className="flex w-3 flex-col items-center justify-between border-l border-[#fafafa] pt-1 pb-4 text-[#b4b4b4]">
          <Chevron className="rotate-180" />
          <Chevron />
        </div>
      </div>
      <div className="flex h-[26px] items-center justify-center gap-1">
        <button type="button" className="h-4 w-[63px] border border-[#adadad] bg-[#e1e1e1]">Close</button>
        <button type="button" className="h-4 w-[63px] border-2 border-[#2b88d8] bg-[#e1e1e1]">Update</button>
      </div>
    </div>
  );
}

export default function App() {
  return (
    <div className="relative flex h-screen flex-col overflow-hidden border border-[#c6c6c6] bg-[#f0f0f0] font-['DejaVu_Sans_Condensed','DejaVu_Sans',sans-serif] text-[7px] leading-[9px] text-black">
      <header className="font-[Roboto,sans-serif] text-[8px]">
        <div className="flex h-5 items-center gap-[3px] bg-white pr-3 pl-1 text-[#8a8a8a]">
          <AppIcon />
          <h1 className="flex-1">RWIND 2.02 Pro - [Anafra_simple*, Results, Surface Pressure]</h1>
          <svg viewBox="0 0 72 8" className="h-2 w-[72px]" fill="none" stroke="#a0a0a0">
            <path d="M0 4.500h7M32.500 1.500h6v6h-6zM64.500 1l6 6M70.500 1l-6 6" />
          </svg>
        </div>
        <nav className="flex h-[18px] items-center bg-linear-to-r from-[#e7ebfa] to-[#f3f6fd] pr-1 pl-1">
          <span className="h-[11px] border-l-2 border-dotted border-[#9aa3bd]" />
          <AppIcon />
          <div className="ml-[7px] flex flex-1 gap-[13px]">
            {MENU.map((item) => (
              <button key={item} type="button">{item}</button>
            ))}
          </div>
          <svg viewBox="0 0 28 8" className="h-2 w-7" fill="none" stroke="#111">
            <path d="M1 6.500h4" strokeWidth="1.500" />
            <path d="M13.500 1.500h4v3h-4zM12.500 3.500h4v3h-4z" />
            <path d="M23 2l4 5M27 2l-4 5" strokeWidth="1.400" />
          </svg>
        </nav>
      </header>
      <Toolbar />
      <div className="flex min-h-0 flex-1 pt-[2px]">
        <Navigator />
        <Viewport />
        <EditBar />
      </div>
      <footer className="flex h-3 items-center justify-end border-t border-[#dadada] font-[Roboto,sans-serif] text-[8px] leading-none">
        <span className="w-[52px] border-l border-[#d4d4d4] pl-[2px]">Section View</span>
        <span className="h-full w-[63px] border-l border-[#d4d4d4]" />
        <span className="h-full w-10 border-l border-[#d4d4d4]" />
        <span className="h-full w-[54px] border-l border-[#d4d4d4]" />
        <span className="h-full w-[45px] border-l border-[#d4d4d4]" />
        <span className="flex h-full w-[58px] items-end justify-end border-l border-[#d4d4d4] p-px">
          <svg viewBox="0 0 6 6" className="size-[6px]">
            <path d="M5 0h1v1H5zM5 2h1v1H5zM5 4h1v1H5zM3 2h1v1H3zM3 4h1v1H3zM1 4h1v1H1z" fill="#999" />
          </svg>
        </span>
      </footer>
      <InfoDialog />
    </div>
  );
}
